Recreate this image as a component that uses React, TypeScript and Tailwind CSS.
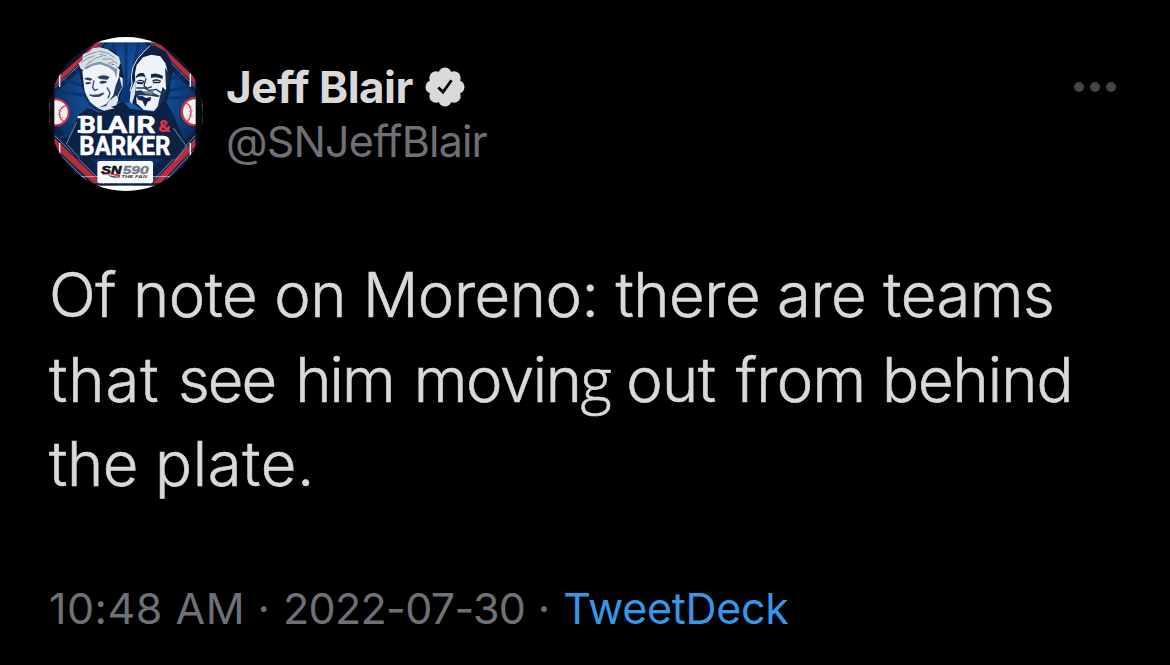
function Avatar() {
  return (
    <svg className="h-[154px] w-[154px] shrink-0" viewBox="27 27 462 462" role="img" aria-label="Blair & Barker">
      <defs>
        <clipPath id="disc"><circle cx="258" cy="258" r="231" /></clipPath>
        <radialGradient id="sky" gradientUnits="userSpaceOnUse" cx="258" cy="210" r="230">
          <stop offset="0" stopColor="#1d62b4" /><stop offset="0.6" stopColor="#10498f" /><stop offset="1" stopColor="#0b2b5c" />
        </radialGradient>
      </defs>
      <g clipPath="url(#disc)">
        <rect x="27" y="27" width="462" height="462" fill="#0b0d12" />
        <rect x="43" y="42" width="424" height="430" fill="#0c2349" />
        <path d="M258 -10 L490 222 V285 L258 490 L43 290 V200Z" fill="url(#sky)" />
        <path d="M258 220L60 150M258 220L80 110M258 220L52 190M258 220L100 80M258 220L160 30M258 220L215 30M258 220L258 30M258 220L300 30M258 220L360 40M258 220L410 90M258 220L440 130M258 220L465 170M258 220L470 205M258 250L60 330M258 250L70 300" stroke="#0b3472" strokeWidth="9" />
        <path d="M43 175L188 42H168L43 155Z" fill="#b92c3d" />
        <path d="M467 172L335 42H355L467 150Z" fill="#b92c3d" />
        <path d="M43 180L194 42M467 178L329 42" stroke="#93a5c4" strokeWidth="2" />
        <path d="M43 148L160 42M467 142L364 42" stroke="#101827" strokeWidth="14" />
        <path d="M43 330L185 466H160L43 356ZM467 330L338 466H362L467 354Z" fill="#b92c3d" />
        <path d="M43 322L192 468M467 322L330 468M43 363L155 472M467 361L364 472" stroke="#aebbd0" strokeWidth="2" fill="none" />
        <path d="M59 135V177M59 345V380M451 137V176M451 345V380" stroke="#f3f6fa" strokeWidth="4" />
        <rect x="80" y="27" width="360" height="16" fill="#fff" />
        <rect x="80" y="473" width="360" height="20" fill="#fff" />
        <path d="M120 446H174M338 446H390" stroke="#d8dfeb" strokeWidth="2" />
        <circle cx="47" cy="253" r="42" fill="#d52d3e" />
        <circle cx="47" cy="253" r="36" fill="#f5f1f2" />
        <path d="M77 232Q58 240 58 258Q60 274 72 281" fill="none" stroke="#c94a57" strokeWidth="4" />
        <path d="M61 235L70 244M54 247L65 250M53 261L64 259M59 274L69 267" stroke="#d6808a" strokeWidth="3" />
        <circle cx="466" cy="251" r="44" fill="#d52d3e" />
        <circle cx="466" cy="251" r="37" fill="#f5f1f2" />
        <path d="M440 225Q454 236 453 253Q452 270 442 281" fill="none" stroke="#c94a57" strokeWidth="4" />
        <path d="M443 240L456 235M446 250L459 248M445 261L458 265" stroke="#d6808a" strokeWidth="3" />
        <rect x="27" y="27" width="16" height="462" fill="#090a0d" />
        <rect x="467" y="27" width="24" height="462" fill="#090a0d" />

        <path d="M78 350L116 262L144 240L176 254L250 220L270 242L340 252L378 220L400 260L440 350L404 392H110Z" fill="#0b2145" />
        <path d="M79 348L110 282M400 300L440 356L405 398M82 350L118 390" fill="none" stroke="#a9b8cf" strokeWidth="2" />

        <path d="M121 149L117 118L131 83L160 63L190 57L222 69L241 93L246 120L252 148L247 185L236 222L205 243L177 250L150 235L134 208Z" fill="#0c2245" />
        <path d="M130 158L127 129L141 119L155 107L176 104L200 106L225 112L239 125L237 145L248 151L248 177L237 199L231 222L208 238L180 242L158 232L141 211L134 190Z" fill="#eef3f8" />
        <path d="M121 121L116 106L127 96L129 79L145 73L158 61L179 58L203 64L220 75L237 87L242 105L235 119L219 108L202 112L180 102L155 108L140 123L129 127Z" fill="#d5dde5" />
        <path d="M132 87L150 77L171 72M124 104L143 91L163 83M146 105L166 91L188 84M174 69L205 76L224 90M187 94L211 92L231 107M139 111L151 99M205 106L219 103M180 78L199 84" fill="none" stroke="#8495a9" strokeWidth="3" />
        <path d="M132 119L142 113L161 106L184 103L209 111L232 123L229 151L222 130L204 117L180 109L158 113L140 124Z" fill="#8495aa" />
        <path d="M132 152Q145 144 157 153L153 158L138 155ZM172 147Q190 137 209 147L202 155L180 153Z" fill="#29405f" />
        <path d="M135 165Q145 159 155 165Q145 171 137 168ZM178 162Q190 155 202 162Q192 169 180 166Z" fill="#29405f" />
        <path d="M162 157L158 179L164 187L174 183M149 201Q168 206 191 195Q183 206 162 205L149 201M201 178L210 195L204 211" fill="none" stroke="#2f496b" strokeWidth="4" />
        <path d="M238 144L246 178L234 200L228 223L203 238L181 246L168 242L199 228L220 202L227 173ZM133 190L150 222L175 242L155 238L136 212Z" fill="#1a385f" />
        <path d="M207 218L229 202L235 215L229 232L194 242ZM170 239L202 233L224 241L192 248Z" fill="#dce6f0" />

        <path d="M269 219L270 191L279 166L272 146L278 117L289 92L311 70L329 52L348 55L378 71L393 99L399 131L391 159L389 192L378 224L352 249L304 244Z" fill="#0b2042" />
        <path d="M286 181L285 135L290 111L309 88L334 80L361 85L376 106L384 134L384 164L373 200L362 226L342 249L311 245L290 226Z" fill="#edf3f8" />
        <path d="M270 190L276 168L274 146L279 117L292 93L311 72L331 52" fill="none" stroke="#e7eef5" strokeWidth="3" />
        <path d="M272 190L285 158L286 194L276 228L269 219Z" fill="#dae4ee" />
        <path d="M286 151Q292 131 312 136L317 149Q302 140 286 151ZM333 139Q350 132 369 144L367 153Q349 144 333 150Z" fill="#112746" />
        <path d="M289 160Q302 151 314 160L308 169L292 168ZM337 157Q351 150 364 159L358 166L340 166Z" fill="#112746" />
        <path d="M292 161H309M341 160H358" stroke="#dce6ef" strokeWidth="3" />
        <path d="M318 151L312 173L321 181L336 176M289 180L312 180L327 187L349 184L365 195" fill="none" stroke="#173253" strokeWidth="4" />
        <path d="M285 189L304 187L311 193L342 196L361 204L353 207L331 203L297 202L292 211L286 204Z" fill="#233a5b" />
        <path d="M308 190L342 188L337 200L318 198Z" fill="#71839a" />
        <path d="M291 205L307 204L318 210L334 207L331 218L323 221L316 237L307 218L294 215Z" fill="#102648" />
        <path d="M368 177L380 190L372 215L352 241L360 205ZM375 119L388 137L388 169L378 181Z" fill="#143156" />

        <g fontFamily="Roboto, 'Liberation Sans', sans-serif" fontWeight="700" fill="#fff" stroke="#fff" strokeWidth="1.5">
          <text x="118" y="314" fontSize="70" textLength="92" lengthAdjust="spacingAndGlyphs">BL</text>
          <text x="201" y="314" fontSize="70" textLength="146" lengthAdjust="spacingAndGlyphs">AIR</text>
          <text x="118" y="380" fontSize="76" textLength="273" lengthAdjust="spacingAndGlyphs">BARKER</text>
          <text x="355" y="313" fontSize="49" fontWeight="900" textLength="38" lengthAdjust="spacingAndGlyphs" fill="#dc3547" stroke="none">&amp;</text>
        </g>
        <path d="M113 264H125V271H113ZM113 306H125V314H113Z" fill="#fff" />
        <rect x="172" y="399" width="167" height="67" rx="7" fill="#fafbfc" />
        <g fontFamily="'Liberation Sans', Arial, sans-serif" fontWeight="700" fontStyle="italic">
          <text x="184" y="437" fontSize="34" textLength="60" lengthAdjust="spacingAndGlyphs" fill="#111318" stroke="#111318" strokeWidth="2">SN</text>
          <text x="248" y="437" fontSize="34" textLength="78" lengthAdjust="spacingAndGlyphs" fill="#747b85" stroke="#747b85" strokeWidth="1">590</text>
          <text x="244" y="450" fontSize="13" textLength="77" lengthAdjust="spacingAndGlyphs" fill="#30353d">THE FAN</text>
        </g>
        <path d="M184 440Q202 433 241 440L238 451L227 443Q208 437 184 440Z" fill="#cf3042" />
        <path d="M203 441L226 445L234 451L214 448Z" fill="#395483" />
      </g>
    </svg>
  );
}

function VerifiedBadge() {
  return (
    <svg className="h-[40px] w-[40px]" viewBox="0 0 40 40" aria-label="Verified account">
      <g fill="#d9d9d9">
        <circle cx="20" cy="20" r="15" />
        <circle cx="20" cy="7.2" r="6.7" /><circle cx="29" cy="11" r="6.7" />
        <circle cx="32.8" cy="20" r="6.7" /><circle cx="29" cy="29" r="6.7" />
        <circle cx="20" cy="32.8" r="6.7" /><circle cx="11" cy="29" r="6.7" />
        <circle cx="7.2" cy="20" r="6.7" /><circle cx="11" cy="11" r="6.7" />
      </g>
      <path d="M13.3 20.4L18 25L26.5 13.2" fill="none" stroke="#000" strokeWidth="2.8" />
    </svg>
  );
}

export default function App() {
  return (
    <main className="h-[665px] w-[1170px] overflow-hidden bg-black pl-[49px] pt-[37px] font-['Inter','Liberation_Sans',sans-serif] text-[#d9d9d9]">
      <header className="flex h-[154px]">
        <Avatar />
        <div className="ml-[23px] pt-[23px]">
          <div className="flex h-[54px] items-center">
            <h1 className="whitespace-nowrap text-[44px] font-bold leading-[54px] tracking-[-0.5px]">Jeff Blair</h1>
            <div className="ml-3"><VerifiedBadge /></div>
          </div>
          <p className="whitespace-nowrap text-[43px] leading-[54px] tracking-[-0.8px] text-[#6e7076]">@SNJeffBlair</p>
        </div>
        <button className="ml-auto mr-[54px] mt-[45px] flex h-[10px] gap-[6px]" aria-label="More">
          <span className="size-[10px] rounded-full bg-[#444548]" />
          <span className="size-[10px] rounded-full bg-[#444548]" />
          <span className="size-[10px] rounded-full bg-[#444548]" />
        </button>
      </header>
      <p className="mt-[62px] whitespace-nowrap text-[61.5px] font-light leading-[84.5px] [-webkit-text-stroke:0.6px_#d9d9d9]">
        <span className="block h-[84.5px] tracking-[-0.42px]">Of note on Moreno: there are teams</span>
        <span className="block h-[84.5px]">
          <span className="tracking-[1px]">that </span>
          <span className="tracking-[-2px]">see</span>
          <span className="tracking-[3px]"> </span>
          <span className="tracking-[-2px]">him</span>
          <span className="tracking-[3px]"> </span>
          <span className="tracking-[-1.4px]">movin<span className="font-['Open_Sans'] text-[60px] leading-none">g</span> </span>
          <span className="tracking-[-0.6px]">out</span>
          <span className="tracking-[3px]"> </span>
          <span className="tracking-[-0.7px]">from </span>
          <span className="tracking-[-1px]">behind</span>
        </span>
        <span className="block h-[84.5px]">
          <span className="tracking-[-0.4px]">the </span>
          <span className="tracking-[0.7px]">plate.</span>
        </span>
      </p>
      <footer className="mt-[74px] whitespace-nowrap text-[43px] leading-[54px] text-[#6e7076]">
        <span className="tracking-[0.5px]">10:48 AM · </span>
        <span className="tracking-[-0.7px]">2022-07-30</span>
        <span className="tracking-[0.5px]"> · </span>
        <a className="tracking-[-0.3px] text-[#3597e5]">TweetDeck</a>
      </footer>
    </main>
  );
}
